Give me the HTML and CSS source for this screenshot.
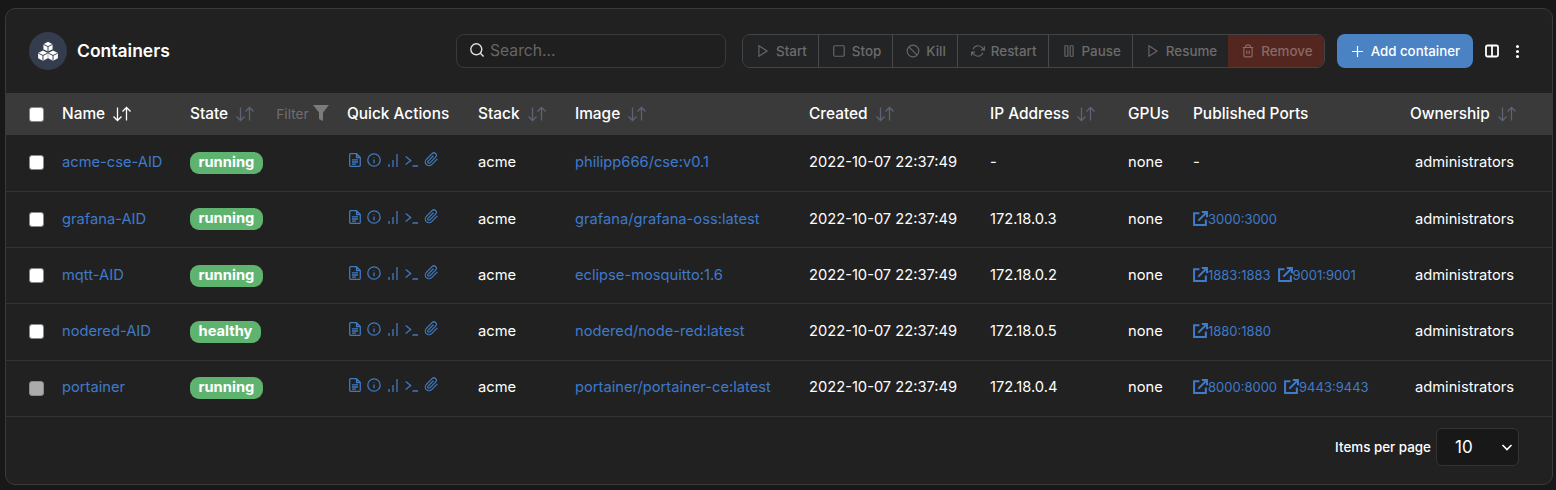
FILE: index.html
```html
<!DOCTYPE html>
<html lang="en">
<head>
<meta charset="utf-8">
<title>Containers</title>
<link rel="stylesheet" href="styles.css">
</head>
<body>
<svg class="defs" width="0" height="0" aria-hidden="true">
  <symbol id="i-sort" viewBox="0 0 20 16"><path d="M5.5 1.500v13M1.500 10.500l4 4 4-4M14.500 14.500v-13M10.500 5.500l4-4 4 4"/></symbol>
  <symbol id="i-doc" viewBox="0 0 12 14"><path d="M7.500.7H1.700a1 1 0 0 0-1 1v10.600a1 1 0 0 0 1 1h8.600a1 1 0 0 0 1-1V4.500zM7.500.7v3.800h3.800M3 6.800h6M3 9h6M3 11.200h4"/></symbol>
  <symbol id="i-info" viewBox="0 0 14 14"><circle cx="7" cy="7" r="6.200"/><path d="M7 10.300V6.500M7 4v.4"/></symbol>
  <symbol id="i-bars" viewBox="0 0 10 13"><path d="M1 13v-3M5 13V6M9 13V0"/></symbol>
  <symbol id="i-term" viewBox="0 0 13 12"><path d="M.7 1.500l5 4-5 4M7.500 11H13"/></symbol>
  <symbol id="i-clip" viewBox="0 0 24 24"><path d="M21.440 11.050l-9.190 9.190a6 6 0 0 1-8.490-8.490l9.190-9.190a4 4 0 0 1 5.660 5.660l-9.200 9.190a2 2 0 0 1-2.830-2.830l8.490-8.480"/></symbol>
  <symbol id="i-ext" viewBox="0 0 14 14"><path d="M6 2H1v11h11V8"/><path d="M5 9l8-8M8.200 1H13v4.800"/></symbol>
</svg>

<main class="card">
  <header class="toolbar">
    <div class="title">
      <span class="logo">
        <svg viewBox="0 0 24 24" width="22" height="22">
          <path class="cube" d="M12 2l5 2.500v5.500l-5 2.500-5-2.500V4.500z"/>
          <path class="cube" d="M6.500 11.500l5.300 2.700v5.600L6.500 22.500 1.200 19.800v-5.600z"/>
          <path class="cube" d="M17.500 11.500l5.300 2.700v5.600l-5.300 2.700-5.300-2.700v-5.600z"/>
          <path class="edge" d="M7 4.700l5 2.500 5-2.500M12 7.200v5.300M1.500 14.400l5 2.500 5-2.500M6.500 16.900v5.300M12.500 14.400l5 2.500 5-2.500M17.500 16.900v5.300"/>
        </svg>
      </span>
      <h1>Containers</h1>
    </div>
    <label class="search">
      <svg class="search-icon" viewBox="0 0 16 16" width="16" height="16"><circle cx="7.300" cy="7.300" r="5.500"/><path d="M11.300 11.300l3.300 3.300"/></svg>
      <input type="text" placeholder="Search...">
    </label>
    <div class="actions">
      <button class="act"><svg viewBox="0 0 24 24"><path d="M5 3l14 9-14 9z"/></svg>Start</button>
      <button class="act"><svg viewBox="0 0 24 24"><rect x="3" y="3" width="18" height="18" rx="2"/></svg>Stop</button>
      <button class="act"><svg viewBox="0 0 24 24"><circle cx="12" cy="12" r="10"/><path d="M4.930 4.930l14.140 14.140"/></svg>Kill</button>
      <button class="act"><svg viewBox="0 0 24 24"><path d="M23 4v6h-6M1 20v-6h6M3.510 9a9 9 0 0 1 14.850-3.360L23 10M1 14l4.640 4.360A9 9 0 0 0 20.490 15"/></svg>Restart</button>
      <button class="act"><svg viewBox="0 0 24 24"><rect x="5" y="3" width="5" height="18" rx="1"/><rect x="14" y="3" width="5" height="18" rx="1"/></svg>Pause</button>
      <button class="act"><svg viewBox="0 0 24 24"><path d="M5 3l14 9-14 9z"/></svg>Resume</button>
      <button class="act act-danger"><svg viewBox="0 0 24 24"><path d="M3 6h18M19 6v14a2 2 0 0 1-2 2H7a2 2 0 0 1-2-2V6m3 0V4a2 2 0 0 1 2-2h4a2 2 0 0 1 2 2v2M10 11v6M14 11v6"/></svg>Remove</button>
    </div>
    <button class="add"><svg viewBox="0 0 14 14" width="13" height="13"><path d="M7 1v12M1 7h12"/></svg>Add container</button>
    <svg class="columns-icon" viewBox="0 0 14 14" width="14" height="14"><rect x="1" y="1.500" width="12" height="11" rx="1.500"/><path d="M7 1.500v11"/></svg>
    <span class="menu-dots"><i></i><i></i><i></i></span>
  </header>

  <table class="grid">
    <colgroup>
      <col class="c-check"><col class="c-name"><col class="c-state"><col class="c-quick"><col class="c-stack"><col class="c-image"><col class="c-created"><col class="c-ip"><col class="c-gpu"><col class="c-ports"><col>
    </colgroup>
    <thead>
      <tr>
        <th class="check"><span class="box"></span></th>
        <th>Name <svg class="sort sort-on"><use href="#i-sort"/></svg></th>
        <th>State <svg class="sort"><use href="#i-sort"/></svg><span class="filter">Filter<svg viewBox="0 0 16 16" width="16" height="16"><path d="M0 0h16l-6 7.500V16l-4-2V7.500z"/></svg></span></th>
        <th>Quick Actions</th>
        <th>Stack <svg class="sort"><use href="#i-sort"/></svg></th>
        <th>Image <svg class="sort"><use href="#i-sort"/></svg></th>
        <th>Created <svg class="sort"><use href="#i-sort"/></svg></th>
        <th>IP Address <svg class="sort"><use href="#i-sort"/></svg></th>
        <th>GPUs</th>
        <th>Published Ports</th>
        <th>Ownership <svg class="sort"><use href="#i-sort"/></svg></th>
      </tr>
    </thead>
    <tbody>
      <tr>
        <td class="check"><span class="box"></span></td>
        <td><a>acme-cse-AID</a></td>
        <td class="state"><span class="badge">running</span></td>
        <td class="quick"><svg class="q-doc"><use href="#i-doc"/></svg><svg class="q-info"><use href="#i-info"/></svg><svg class="q-bars"><use href="#i-bars"/></svg><svg class="q-term"><use href="#i-term"/></svg><svg class="q-clip"><use href="#i-clip"/></svg></td>
        <td>acme</td>
        <td><a>philipp666/cse:v0.1</a></td>
        <td>2022-10-07 22:37:49</td>
        <td>-</td>
        <td>none</td>
        <td>-</td>
        <td class="owner">administrators</td>
      </tr>
      <tr>
        <td class="check"><span class="box"></span></td>
        <td><a>grafana-AID</a></td>
        <td class="state"><span class="badge">running</span></td>
        <td class="quick"><svg class="q-doc"><use href="#i-doc"/></svg><svg class="q-info"><use href="#i-info"/></svg><svg class="q-bars"><use href="#i-bars"/></svg><svg class="q-term"><use href="#i-term"/></svg><svg class="q-clip"><use href="#i-clip"/></svg></td>
        <td>acme</td>
        <td><a>grafana/grafana-oss:latest</a></td>
        <td>2022-10-07 22:37:49</td>
        <td>172.18.0.3</td>
        <td>none</td>
        <td><a class="port"><svg><use href="#i-ext"/></svg>3000:3000</a></td>
        <td class="owner">administrators</td>
      </tr>
      <tr>
        <td class="check"><span class="box"></span></td>
        <td><a>mqtt-AID</a></td>
        <td class="state"><span class="badge">running</span></td>
        <td class="quick"><svg class="q-doc"><use href="#i-doc"/></svg><svg class="q-info"><use href="#i-info"/></svg><svg class="q-bars"><use href="#i-bars"/></svg><svg class="q-term"><use href="#i-term"/></svg><svg class="q-clip"><use href="#i-clip"/></svg></td>
        <td>acme</td>
        <td><a>eclipse-mosquitto:1.6</a></td>
        <td>2022-10-07 22:37:49</td>
        <td>172.18.0.2</td>
        <td>none</td>
        <td><a class="port"><svg><use href="#i-ext"/></svg>1883:1883</a><a class="port"><svg><use href="#i-ext"/></svg>9001:9001</a></td>
        <td class="owner">administrators</td>
      </tr>
      <tr>
        <td class="check"><span class="box"></span></td>
        <td><a>nodered-AID</a></td>
        <td class="state"><span class="badge">healthy</span></td>
        <td class="quick"><svg class="q-doc"><use href="#i-doc"/></svg><svg class="q-info"><use href="#i-info"/></svg><svg class="q-bars"><use href="#i-bars"/></svg><svg class="q-term"><use href="#i-term"/></svg><svg class="q-clip"><use href="#i-clip"/></svg></td>
        <td>acme</td>
        <td><a>nodered/node-red:latest</a></td>
        <td>2022-10-07 22:37:49</td>
        <td>172.18.0.5</td>
        <td>none</td>
        <td><a class="port"><svg><use href="#i-ext"/></svg>1880:1880</a></td>
        <td class="owner">administrators</td>
      </tr>
      <tr>
        <td class="check"><span class="box box-off"></span></td>
        <td><a>portainer</a></td>
        <td class="state"><span class="badge">running</span></td>
        <td class="quick"><svg class="q-doc"><use href="#i-doc"/></svg><svg class="q-info"><use href="#i-info"/></svg><svg class="q-bars"><use href="#i-bars"/></svg><svg class="q-term"><use href="#i-term"/></svg><svg class="q-clip"><use href="#i-clip"/></svg></td>
        <td>acme</td>
        <td><a>portainer/portainer-ce:latest</a></td>
        <td>2022-10-07 22:37:49</td>
        <td>172.18.0.4</td>
        <td>none</td>
        <td><a class="port"><svg><use href="#i-ext"/></svg>8000:8000</a><a class="port"><svg><use href="#i-ext"/></svg>9443:9443</a></td>
        <td class="owner">administrators</td>
      </tr>
    </tbody>
  </table>

  <footer class="pager">
    <span class="pager-label">Items per page</span>
    <span class="select">10<svg viewBox="0 0 12 12" width="12" height="12"><path d="M1.500 4L6 8.500 10.500 4"/></svg></span>
  </footer>
</main>
</body>
</html>
```
FILE: styles.css
```css
* { box-sizing: border-box; }
html, body { margin: 0; height: 100%; }
body {
  background: #181818;
  color: #fff;
  font-family: Inter, "Liberation Sans", sans-serif;
  font-size: 14.7px;
  padding: 8px 3px 5px 5px;
  overflow: hidden;
}
.defs { position: absolute; }
.card {
  background: #212121;
  border: 1px solid #3a3a3a;
  border-radius: 10px;
  height: 477px;
  overflow: hidden;
}
.toolbar {
  display: flex;
  align-items: center;
  height: 84px;
  padding: 0 0 0 23px;
}
.toolbar > * { flex: none; }
.title { display: flex; align-items: center; gap: 10px; width: 427px; }
.logo {
  width: 38px; height: 38px;
  border-radius: 50%;
  background: #343c4e;
  display: flex; align-items: center; justify-content: center;
}
.cube { fill: #fff; }
.edge { fill: none; stroke: #2b3245; stroke-width: 1; }
h1 { font-size: 17.5px; font-weight: 600; margin: 0 0 2px; }
.search {
  display: flex; align-items: center; gap: 5px;
  width: 270px; height: 34px;
  padding: 0 12px 2px;
  border: 1px solid #3a3a3a;
  border-radius: 8px;
  background: #1f1f1f;
}
.search-icon { fill: none; stroke: #e0e0e0; stroke-width: 1.4; flex: none; }
.search input {
  background: none; border: 0; outline: 0; width: 100%;
  font: 15.7px Inter, sans-serif; color: #fff; padding: 0;
}
.search input::placeholder { color: #666; }
.actions {
  display: flex;
  margin-left: 16px;
  height: 34px;
  border: 1px solid #444;
  border-radius: 8px;
  overflow: hidden;
}
.act {
  display: flex; align-items: center; gap: 6px;
  height: 100%;
  padding: 0 11px 0 13px;
  background: #232425;
  border: 0;
  border-left: 1px solid #4a4a4a;
  color: #6c6c6c;
  font: 500 13.4px Inter, sans-serif;
}
.act:first-child { border-left: 0; }
.act svg { width: 14px; height: 14px; fill: none; stroke: #666; stroke-width: 2; flex: none; }
.act-danger { background: #53261f; color: #8a6a64; border-left: 0; }
.act-danger svg { stroke: #8a6a64; }
.add {
  display: flex; align-items: center; gap: 7px;
  margin-left: 12px;
  width: 136px; height: 34px;
  padding: 0 0 0 14px;
  border: 0; border-radius: 8px;
  background: #4a82c4;
  color: #fff;
  font: 500 13.3px Inter, sans-serif;
}
.add svg { fill: none; stroke: #fff; stroke-width: 1.3; }
.columns-icon { margin-left: 12px; fill: none; stroke: #fff; stroke-width: 1.800; }
.menu-dots { display: flex; flex-direction: column; gap: 2px; margin-left: 17px; }
.menu-dots i { width: 3px; height: 3px; background: #fff; border-radius: 50%; }

.grid { width: 100%; table-layout: fixed; border-collapse: collapse; }
.c-check { width: 56px; } .c-name { width: 128px; } .c-state { width: 157px; }
.c-quick { width: 131px; } .c-stack { width: 97px; } .c-image { width: 234px; }
.c-created { width: 181px; } .c-ip { width: 138px; } .c-gpu { width: 65px; }
.c-ports { width: 217px; }
th, td { padding: 0 0 1.500px; text-align: left; white-space: nowrap; }
th { padding-bottom: 0; }
thead tr { background: #3a3a3a; height: 42px; }
th { font-weight: 500; font-size: 15.4px; line-height: 20px; }
tbody tr { height: 56.25px; border-bottom: 1px solid #343434; }
a { color: #3f7acb; font-weight: 400; }
.check { padding: 0 0 0 23px; }
.state { padding: 0; }
.box {
  display: block; width: 15px; height: 15px;
  background: #fff;
  border: 1px solid #8a8a8a;
  border-radius: 3px;
}
.box-off { background: #ababab; }
.sort {
  width: 20px; height: 16px;
  vertical-align: -3px;
  margin-left: 3px;
  fill: none; stroke: #5d6374; stroke-width: 1.3;
}
.sort-on { stroke: #fff; }
.filter {
  margin-left: 21px;
  color: #6e6e6e; font-size: 13.7px; font-weight: 400;
}
.filter svg { fill: #7b7b7b; margin-left: 4px; vertical-align: -2px; }
.badge {
  display: inline-block;
  height: 22px; line-height: 21px;
  padding: 0 8.5px;
  border-radius: 9px;
  background: #5eb36f;
  font-weight: 700;
}
.quick { padding-left: 2px; }
.quick svg { fill: none; stroke: #4079bd; stroke-width: 1.3; vertical-align: 1px; }
.quick .q-clip { stroke-width: 2; }
.q-doc { width: 12px; height: 14px; margin-right: 6px; }
.q-info { width: 14px; height: 14px; margin-right: 7px; }
.q-bars { width: 10px; height: 13px; margin-right: 7px; }
.q-term { width: 13px; height: 12px; margin-right: 6px; }
.q-clip { width: 15px; height: 15px; }
.port { display: inline-block; font-size: 13px; margin-right: 7px; }
.port svg {
  width: 15px; height: 15px; vertical-align: -2px;
  fill: none; stroke: #3f7acb; stroke-width: 1.900;
}
.owner { padding-left: 5px; }
.pager {
  display: flex; align-items: center; justify-content: flex-end;
  height: 60px;
  padding-right: 33px;
}
.pager-label { font-size: 13.4px; font-weight: 500; margin-right: 5px; }
.select {
  display: flex; align-items: center; justify-content: space-between;
  width: 83px; height: 38px;
  padding: 0 5px 0 18px;
  border: 1px solid #333;
  border-radius: 6px;
  background: #181818;
  font-size: 17px;
}
.select svg { fill: none; stroke: #fff; stroke-width: 1.6; }
```
